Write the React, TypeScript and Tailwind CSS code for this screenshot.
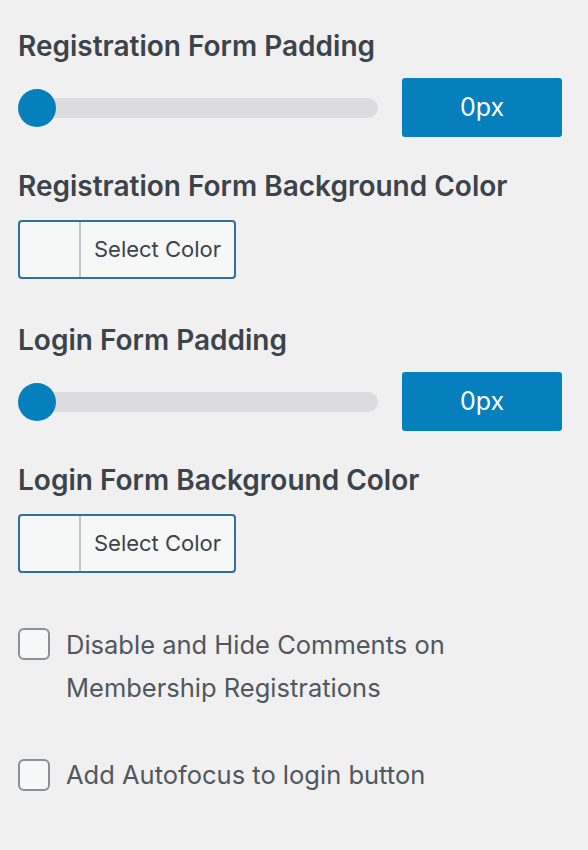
export default function App() {
  return (
    <div className="min-h-[850px] w-[588px] bg-[#f0f0f1] pl-[18px] pr-[26px] pt-[30px] text-[#50575e] font-['Inter','Liberation_Sans',sans-serif]">
      {/* registration padding */}
      <h2 className="text-[28px] font-semibold leading-[32px] text-[#3c434a]">Registration Form Padding</h2>
      <div className="mt-[16px] flex items-center">
        <div className="relative h-[20px] w-[360px] rounded-full bg-[#dcdcde]">
          <div className="absolute left-0 top-[-9px] h-[38px] w-[38px] rounded-full bg-[#0580bc]" />
        </div>
        <div className="ml-[24px] flex h-[59px] w-[160px] items-center justify-center rounded-[3px] bg-[#0580bc] text-[25px] text-white">0px</div>
      </div>

      <h2 className="mt-[33px] text-[28px] font-semibold leading-[32px] text-[#3c434a]">Registration Form Background Color</h2>
      <div className="mt-[18px] flex h-[59px] w-[218px] overflow-hidden rounded-[4px] border-2 border-[#2f6f9f] bg-[#f6f7f7]">
        <div className="w-[61px] border-r-2 border-[#c3c4c7]" />
        <div className="flex flex-1 items-center justify-center text-[22px] text-[#3c434a]">Select Color</div>
      </div>

      <h2 className="mt-[45px] text-[28px] font-semibold leading-[32px] text-[#3c434a]">Login Form Padding</h2>
      <div className="mt-[16px] flex items-center">
        <div className="relative h-[20px] w-[360px] rounded-full bg-[#dcdcde]">
          <div className="absolute left-0 top-[-9px] h-[38px] w-[38px] rounded-full bg-[#0580bc]" />
        </div>
        <div className="ml-[24px] flex h-[59px] w-[160px] items-center justify-center rounded-[3px] bg-[#0580bc] text-[25px] text-white">0px</div>
      </div>

      <h2 className="mt-[33px] text-[28px] font-semibold leading-[32px] text-[#3c434a]">Login Form Background Color</h2>
      <div className="mt-[18px] flex h-[59px] w-[218px] overflow-hidden rounded-[4px] border-2 border-[#2f6f9f] bg-[#f6f7f7]">
        <div className="w-[61px] border-r-2 border-[#c3c4c7]" />
        <div className="flex flex-1 items-center justify-center text-[22px] text-[#3c434a]">Select Color</div>
      </div>

      {/* checkboxes */}
      <label className="mt-[50px] flex items-start">
        <span className="mt-[5px] h-[32px] w-[32px] shrink-0 rounded-[6px] border-2 border-[#8c8f94] bg-[#f6f7f7]" />
        <span className="ml-[16px] text-[25.5px] leading-[43px]">
          Disable and Hide Comments on
          <br />
          Membership Registrations
        </span>
      </label>
      <label className="mt-[44px] flex items-center">
        <span className="h-[32px] w-[32px] shrink-0 rounded-[6px] border-2 border-[#8c8f94] bg-[#f6f7f7]" />
        <span className="ml-[16px] text-[25.5px] leading-[43px]">Add Autofocus to login button</span>
      </label>
    </div>
  );
}
